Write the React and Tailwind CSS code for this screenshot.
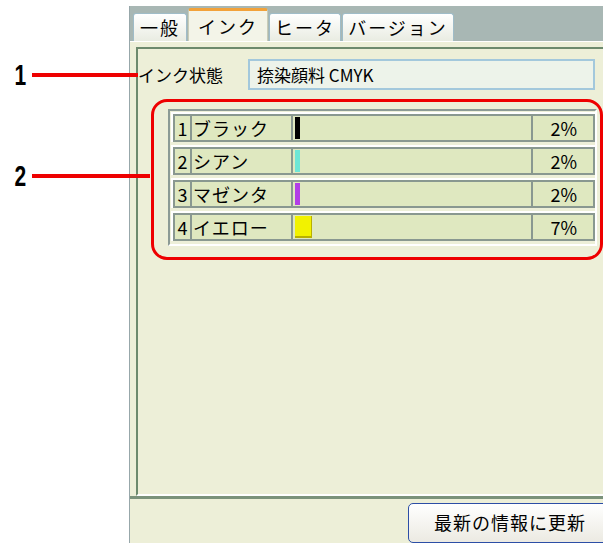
import React from "react";

const inks = [
  { no: 1, name: "ブラック", color: "bg-[#000000]", w: "w-[5px]", pct: "2%" },
  { no: 2, name: "シアン", color: "bg-[#6ee6d6]", w: "w-[5px]", pct: "2%" },
  { no: 3, name: "マゼンタ", color: "bg-[#b23ee6]", w: "w-[5px]", pct: "2%" },
  { no: 4, name: "イエロー", color: "bg-[#f2f200] border-b-2 border-r border-[#b8b000]", w: "w-[17px]", pct: "7%" },
];

const Tab = ({ label, width, selected }) => (
  <div
    className={`${width} flex items-center justify-center text-[18px] tracking-[2px] text-black rounded-t-[3px] border border-b-0 ${
      selected
        ? "h-[33px] bg-[#f3f4e8] border-[#c9cdb8] border-t-[3px] border-t-[#f2a23a]"
        : "h-[28px] bg-gradient-to-b from-white to-[#e9ece2] border-[#9fbcc8]"
    }`}
  >
    {label}
  </div>
);

const InkRow = ({ ink }) => (
  <div className="h-[30px] border-t-2 border-l-2 border-white flex">
    <div className="flex-1 flex border-2 border-[#899890] bg-[#dfe8c0] text-[18px] leading-none text-black">
      <div className="w-[17px] border-r-2 border-[#899890] flex items-center justify-center">{ink.no}</div>
      <div className="w-[101px] border-r-2 border-[#899890] flex items-center pl-[1px] tracking-[1px]">{ink.name}</div>
      <div className="w-[240px] border-r-2 border-[#899890] flex py-[1px] pl-[2px]">
        <div className={`${ink.w} h-full ${ink.color}`} />
      </div>
      <div className="flex-1 flex items-center justify-end pr-[16px]">{ink.pct}</div>
    </div>
  </div>
);

const Callout = ({ num, top, lineTop, lineWidth }) => (
  <>
    <div
      className={`absolute left-[12px] ${top} text-[30px] font-bold leading-none text-black scale-x-[0.7] font-['Liberation_Sans',sans-serif]`}
    >
      {num}
    </div>
    <div className={`absolute left-[32px] ${lineTop} ${lineWidth} h-[4px] bg-[#ee0000]`} />
  </>
);

export default function App() {
  return (
    <div className="relative w-[603px] h-[543px] overflow-hidden bg-white flex font-['Noto_Sans_CJK_JP','Noto_Sans',sans-serif]">
      <div className="w-[129px] shrink-0" />

      {/* Window */}
      <div className="w-[490px] shrink-0 mt-[6px] flex flex-col border-l border-[#97a7aa] bg-[#a8b7b4]">
        {/* Tabs */}
        <div className="h-[36px] flex items-end pl-[3px] gap-[1px]">
          <Tab label="一般" width="w-[54px]" />
          <Tab label="インク" width="w-[80px]" selected />
          <Tab label="ヒータ" width="w-[72px]" />
          <Tab label="バージョン" width="w-[112px]" />
        </div>

        {/* Tab page */}
        <div className="h-[461px] bg-[#edefd8] border-t border-white border-b-[3px] border-b-[#7b927b] pt-[5px] pl-[6px]">
          <div className="h-[449px] border-t-2 border-l-2 border-[#6d8a6d] border-b-2 border-b-white pt-[10px]">
            <div className="flex items-center">
              <span className="w-[80px] text-[17px] text-black whitespace-nowrap">インク状態</span>
              <div className="ml-[30px] w-[347px] h-[31px] border-2 border-[#a3c8dc] bg-[#edf3ea] flex items-center pl-[7px] text-[17px] text-black whitespace-nowrap">
                捺染顔料 CMYK
              </div>
            </div>

            <div className="mt-[19px] ml-[30px] w-[429px] h-[137px] border-t-2 border-l-2 border-[#8c9b95] border-b-2 border-r-2 border-b-white border-r-white pt-[1px] pl-[1px] flex flex-col gap-[3px]">
              {inks.map((ink) => (
                <InkRow key={ink.no} ink={ink} />
              ))}
            </div>
          </div>
        </div>

        {/* Bottom bar */}
        <div className="flex-1 bg-[#edefd8] pt-[4px] pl-[278px]">
          <div className="w-[204px] h-[40px] rounded-[5px] border border-[#2c4ea6] bg-gradient-to-b from-white to-[#eceae2] flex items-start justify-center pt-[5px] text-[18px] tracking-[1px] text-black whitespace-nowrap">
            最新の情報に更新
          </div>
        </div>
      </div>

      {/* Annotations */}
      <Callout num="1" top="top-[60px]" lineTop="top-[73px]" lineWidth="w-[106px]" />
      <Callout num="2" top="top-[161px]" lineTop="top-[174px]" lineWidth="w-[118px]" />
      <div className="absolute left-[151px] top-[99px] w-[452px] h-[161px] border-[3px] border-[#ee0000] rounded-[16px]" />
    </div>
  );
}
